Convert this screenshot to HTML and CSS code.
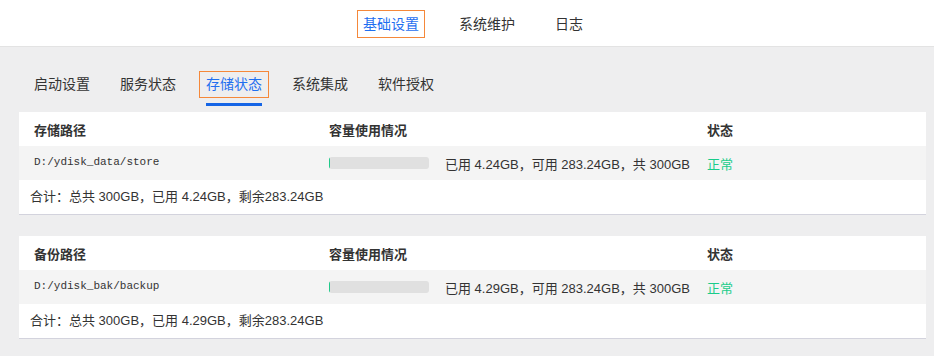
FILE: index.html
```html
<!DOCTYPE html>
<html lang="zh-CN">
<head>
    <meta charset="UTF-8">
    <meta name="viewport" content="width=device-width, initial-scale=1.0">
    <title>存储状态 - 基础设置</title>
    <link rel="stylesheet" href="styles.css">
</head>
<body>
    <!-- Top navigation -->
    <div class="top-bar">
        <div class="top-nav">
            <a class="top-item active">基础设置</a>
            <a class="top-item">系统维护</a>
            <a class="top-item">日志</a>
        </div>
    </div>

    <div class="main">
        <!-- Sub tabs -->
        <div class="tabs">
            <div class="tab"><span class="tab-label">启动设置</span><span class="tab-bar"></span></div>
            <div class="tab"><span class="tab-label">服务状态</span><span class="tab-bar"></span></div>
            <div class="tab active"><span class="tab-label">存储状态</span><span class="tab-bar"></span></div>
            <div class="tab"><span class="tab-label">系统集成</span><span class="tab-bar"></span></div>
            <div class="tab"><span class="tab-label">软件授权</span><span class="tab-bar"></span></div>
        </div>

        <!-- Storage card -->
        <div class="card">
            <div class="row head">
                <div>存储路径</div>
                <div>容量使用情况</div>
                <div>状态</div>
            </div>
            <div class="row data">
                <div class="path">D:/ydisk_data/store</div>
                <div class="usage">
                    <div class="bar"><div class="bar-fill" style="width: 1.4%;"></div></div>
                    <span>已用 4.24GB，可用 283.24GB，共 300GB</span>
                </div>
                <div class="ok">正常</div>
            </div>
            <div class="total">合计：总共 300GB，已用 4.24GB，剩余283.24GB</div>
        </div>

        <!-- Backup card -->
        <div class="card">
            <div class="row head">
                <div>备份路径</div>
                <div>容量使用情况</div>
                <div>状态</div>
            </div>
            <div class="row data">
                <div class="path">D:/ydisk_bak/backup</div>
                <div class="usage">
                    <div class="bar"><div class="bar-fill" style="width: 1.43%;"></div></div>
                    <span>已用 4.29GB，可用 283.24GB，共 300GB</span>
                </div>
                <div class="ok">正常</div>
            </div>
            <div class="total">合计：总共 300GB，已用 4.29GB，剩余283.24GB</div>
        </div>
    </div>
</body>
</html>
```

FILE: styles.css
```css
body {
    margin: 0;
    background-color: #eeeeef;
    font-family: "Liberation Sans", "Noto Sans CJK SC", sans-serif;
    color: #333;
    font-size: 13px;
}
.top-bar {
    background-color: white;
    height: 46px;
    border-bottom: 1px solid #e3e3e3;
    box-sizing: content-box;
}
.top-nav {
    display: flex;
    justify-content: center;
    gap: 28px;
    padding: 10px 0 0 12px;
}
.top-item {
    font-size: 14px;
    line-height: 26px;
    padding: 0 5px;
    border: 1px solid transparent;
    color: #333;
    cursor: pointer;
}
.top-item.active {
    color: #1f6ff0;
    border-color: #f5883a;
}
.main {
    padding: 0 8px 0 19px;
}
.tabs {
    display: flex;
    gap: 16px;
    padding: 24px 0 0 8px;
}
.tab {
    display: flex;
    flex-direction: column;
    cursor: pointer;
}
.tab-label {
    font-size: 14px;
    line-height: 25px;
    padding: 0 6px;
    border: 1px solid transparent;
}
.tab-bar {
    height: 3px;
    margin: 5px 7px 0;
}
.tab.active .tab-label {
    color: #1f6ff0;
    border-color: #f5883a;
}
.tab.active .tab-bar {
    background-color: #1565e6;
}
.card {
    background-color: white;
    box-shadow: 0 1px 0 #d3d3dd;
    margin: 6px 0 22px;
}
.card + .card {
    margin-top: 0;
}
.row {
    display: grid;
    grid-template-columns: 295px 378px 1fr;
    align-items: center;
    height: 34px;
    padding-left: 15px;
}
.row.head {
    font-weight: bold;
}
.row.data {
    background-color: #f4f4f4;
}
.path {
    font-family: "Liberation Mono", monospace;
    font-size: 11px;
    padding-bottom: 2px;
}
.usage {
    display: flex;
    align-items: center;
    gap: 16px;
}
.bar {
    width: 100px;
    height: 12px;
    border-radius: 3px;
    background-color: #e0e0e0;
    overflow: hidden;
}
.bar-fill {
    height: 100%;
    background-color: #20c98a;
}
.ok {
    color: #19cc8a;
}
.total {
    height: 34px;
    line-height: 34px;
    padding-left: 11px;
}
```
